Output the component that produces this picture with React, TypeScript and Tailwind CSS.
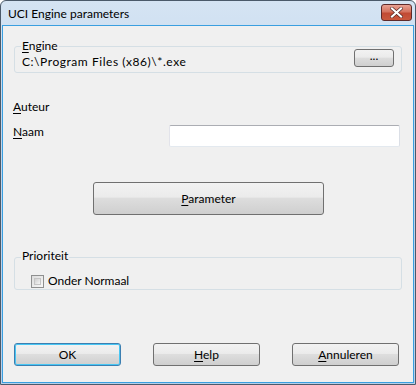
import React from "react";

const btn =
  "flex items-center justify-center rounded-[3px] border border-[#707070] bg-[linear-gradient(#f2f2f2_0%,#ebebeb_45%,#dddddd_50%,#cfcfcf_100%)] text-[12px] text-black leading-[16px]";

const ul = "inline-block first-letter:underline underline-offset-[2px]";

export default function App() {
  return (
    <div
      className="w-[416px] h-[385px] bg-white"
      style={{ fontFamily: 'Lato, "Noto Sans", sans-serif' }}
    >
      <div className="w-[416px] h-[385px] flex flex-col border border-[#4b5a6a] rounded-t-[6px] bg-[linear-gradient(#d5e4f3_0%,#c1d6ec_30%,#b6cfea_100%)] overflow-hidden">
        {/* Title bar */}
        <div className="h-[24px] shrink-0 flex items-center pl-[7px] pr-[3px]">
          <span className="text-[12px] text-black leading-[16px] mt-[1px]">UCI Engine parameters</span>
          <div className="ml-auto mt-[-1px] w-[31px] h-[17px] rounded-[3px] border border-[#5e2a2a] bg-[linear-gradient(#e8a193_0%,#d4735f_45%,#c14a34_55%,#c9583e_100%)] flex items-center justify-center">
            <svg width="13" height="11" viewBox="0 0 13 11">
              <path d="M2 1.5 L11 9.5 M11 1.5 L2 9.5" stroke="#4a2020" strokeWidth="3.4" strokeLinecap="square" />
              <path d="M2 1.5 L11 9.5 M11 1.5 L2 9.5" stroke="#ffffff" strokeWidth="2.2" strokeLinecap="square" />
            </svg>
          </div>
        </div>
        {/* Client area */}
        <div className="flex-1 mx-[1px] mb-[1px] border border-[#3a9fe0] bg-[#f0f0f0] px-[9px] flex flex-col text-[12px] leading-[16px] text-black">
          {/* Engine group */}
          <div className="mt-[20px] h-[27px] shrink-0 relative border border-[#d5dfe5] rounded-[3px] mx-[2px]">
            <span className="absolute left-[6px] top-[-9px] bg-[#f0f0f0] px-[1px]">
              <span className={ul}>Engine</span>
            </span>
            <div className="flex items-start h-full pl-[7px] pr-[7px]">
              <span className="mt-[7px] tracking-[0.55px]">C:\Program Files (x86)\*.exe</span>
              <div className={btn + " ml-auto mt-[2px] w-[40px] h-[18px] pb-[4px]"}>...</div>
            </div>
          </div>
          {/* Auteur */}
          <div className="mt-[26px] h-[16px] ml-[1px] shrink-0">
            <span className={ul}>Auteur</span>
          </div>
          {/* Naam */}
          <div className="mt-[9px] flex items-start ml-[1px] shrink-0">
            <span className={ul}>Naam</span>
            <div className="ml-auto mr-[4px] mt-[1px] w-[231px] h-[22px] bg-white border border-[#abadb3] border-b-[#e3e9ef] border-r-[#dbdfe6] border-l-[#e2e3ea] rounded-[2px]" />
          </div>
          {/* Parameter button */}
          <div className="mt-[35px] flex justify-center shrink-0">
            <div className={btn + " w-[231px] h-[33px] ml-[1px]"}>
              <span className={ul}>Parameter</span>
            </div>
          </div>
          {/* Prioriteit group */}
          <div className="mt-[42px] h-[33px] shrink-0 relative border border-[#d5dfe5] rounded-[3px] mx-[2px]">
            <span className="absolute left-[6px] top-[-10px] bg-[#f0f0f0] px-[1px]">Prioriteit</span>
            <div className="flex items-center pl-[16px] pt-[15px]">
              <div className="w-[13px] h-[13px] border border-[#8e8f8f] bg-[linear-gradient(135deg,#dcdcdc,#f8f8f8)] p-[2px]">
                <div className="w-full h-full border border-[#c5c5c5] bg-[linear-gradient(135deg,#cfcfcf,#f4f4f4)]" />
              </div>
              <span className="ml-[4px]">Onder Normaal</span>
            </div>
          </div>
          {/* Bottom buttons */}
          <div className="mt-[53px] flex justify-between pl-[2px] pr-[5px] shrink-0">
            <div className={btn.replace("border-[#707070]", "border-[#3c7fb1]") + " w-[107px] h-[23px] shadow-[inset_0_0_0_1px_#48c6f3]"}>OK</div>
            <div className={btn + " w-[107px] h-[23px]"}>
              <span className={ul}>Help</span>
            </div>
            <div className={btn + " w-[107px] h-[23px]"}>
              <span className={ul}>Annuleren</span>
            </div>
          </div>
        </div>
      </div>
    </div>
  );
}
